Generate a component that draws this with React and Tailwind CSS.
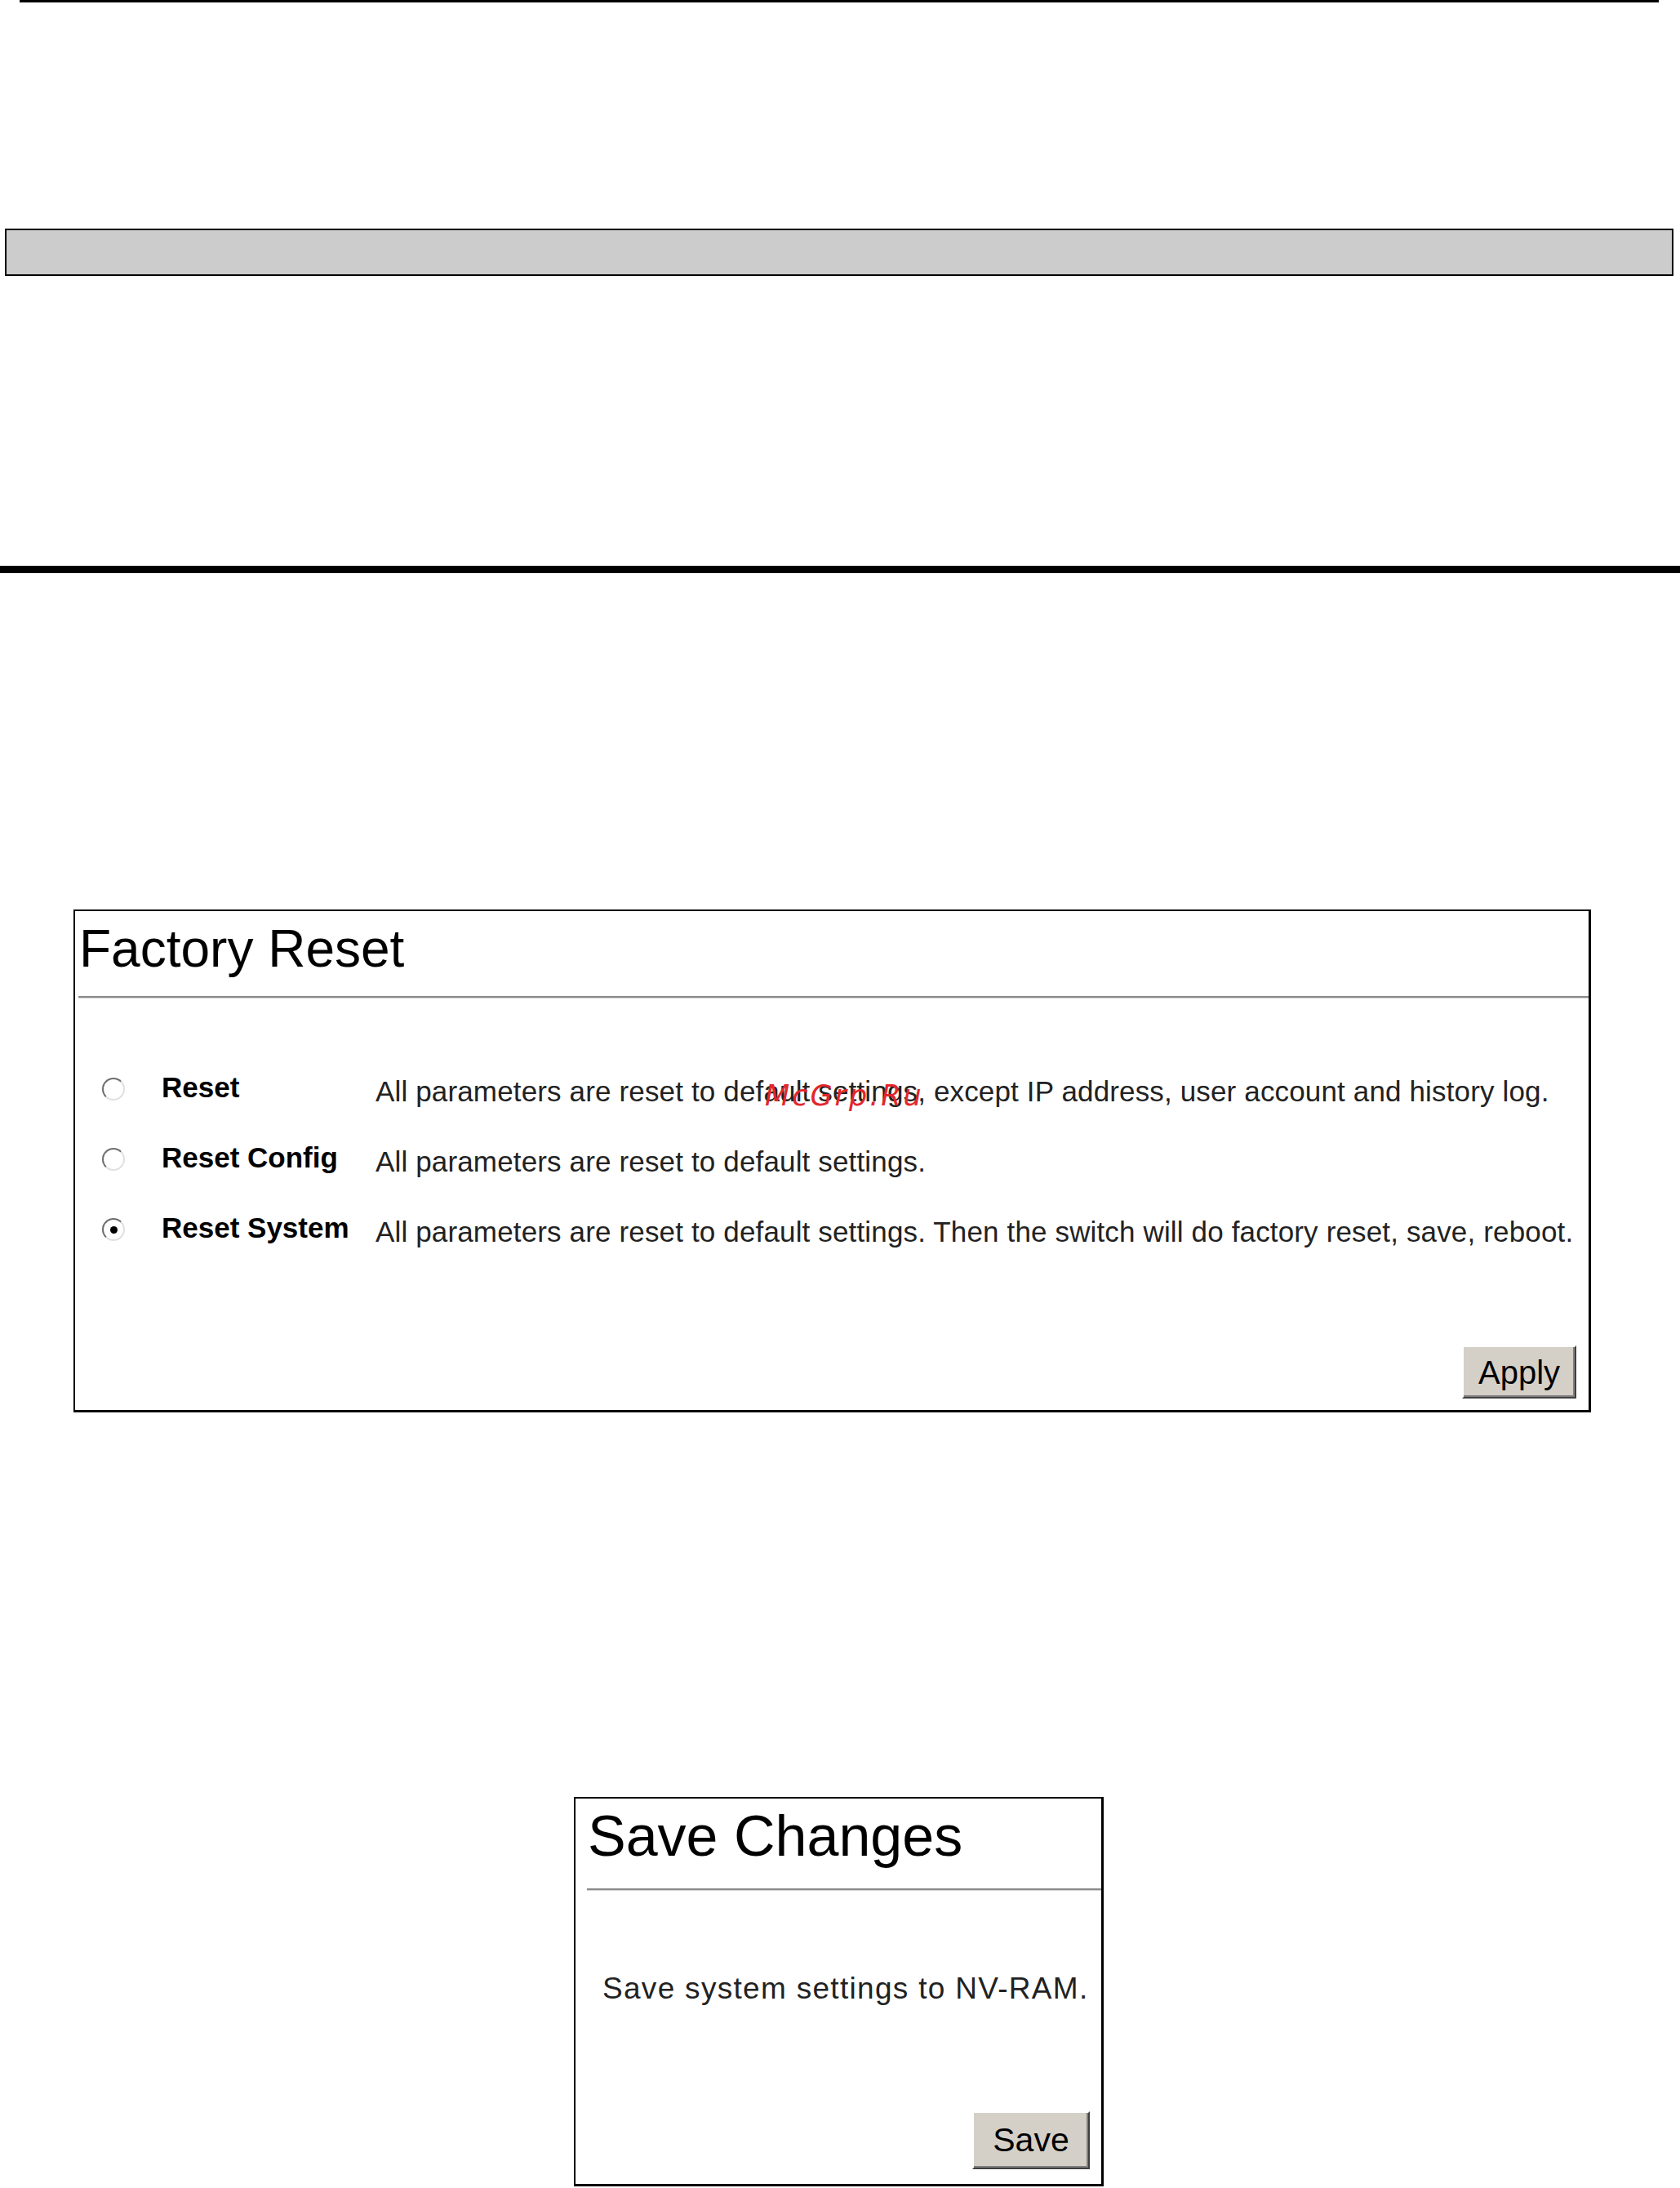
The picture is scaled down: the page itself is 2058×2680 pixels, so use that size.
import clsx from "clsx";

const font = "font-['Liberation_Sans',Arial,sans-serif]";

const resetOptions = [
  {
    id: "reset",
    label: "Reset",
    description: "All parameters are reset to default settings, except IP address, user account and history log."
  },
  {
    id: "reset-config",
    label: "Reset Config",
    description: "All parameters are reset to default settings."
  },
  {
    id: "reset-system",
    label: "Reset System",
    description: "All parameters are reset to default settings. Then the switch will do factory reset, save, reboot."
  }
];

function Radio({ checked }) {
  return (
    <span className="grid h-[28px] w-[28px] place-items-center rounded-full border-2 border-t-[#6e6e6e] border-l-[#6e6e6e] border-r-[#e0e0e0] border-b-[#e0e0e0] bg-white">
      {checked ? <span className="h-[9px] w-[9px] rounded-full bg-black" /> : null}
    </span>
  );
}

function ClassicButton({ children, className }) {
  return (
    <button
      type="button"
      className={clsx(
        "border-2 border-t-white border-l-white border-r-[#404040] border-b-[#404040] bg-[#d4d0c8] text-black shadow-[inset_-2px_-2px_0_#808080]",
        font,
        className
      )}
    >
      {children}
    </button>
  );
}

function Rule({ className }) {
  return <div className={clsx("h-[2px] bg-[#8a8a8a] shadow-[0_1px_0_#d2d2d2]", className)} />;
}

function FactoryReset() {
  const selected = "reset-system";

  return (
    <section className="relative ml-[90px] mt-[412px] flex h-[616px] w-[1859px] flex-col border-2 border-r-[3px] border-b-[3px] border-black bg-white">
      <h2 className={clsx("pl-[5px] pt-[14px] text-[64px] leading-none font-normal text-black", font)}>
        Factory Reset
      </h2>
      <Rule className="ml-[4px] mt-[26px]" />

      <div className="mt-[90px] flex flex-col">
        {resetOptions.map((option) => (
          <label key={option.id} className="flex h-[86px] items-start">
            <span className="ml-[33px] mt-[8px]">
              <Radio checked={option.id === selected} />
            </span>
            <span className={clsx("ml-[45px] w-[262px] text-[35px] leading-[40px] font-bold text-black", font)}>
              {option.label}
            </span>
            <span className={clsx("pt-[5px] text-[35px] leading-[40px] tracking-[0.15px] text-[#222]", font)}>
              {option.description}
            </span>
          </label>
        ))}
      </div>

      <div className="mt-[78px] flex justify-end pr-[15px]">
        <ClassicButton className="h-[65px] w-[140px] text-[40px] leading-none">Apply</ClassicButton>
      </div>

      <span className="absolute left-[845px] top-[209px] font-['DejaVu_Sans',sans-serif] text-[35px] leading-none tracking-[3px] text-[#e3262b] italic">
        McGrp.Ru
      </span>
    </section>
  );
}

function SaveChanges() {
  return (
    <section className="ml-[703px] mt-[471px] flex h-[477px] w-[649px] flex-col border-2 border-r-[3px] border-b-[3px] border-black bg-white">
      <h2 className={clsx("pl-[15px] pt-[11px] text-[70px] leading-none font-normal text-black", font)}>
        Save Changes
      </h2>
      <Rule className="ml-[14px] mt-[29px]" />
      <p className={clsx("ml-[33px] mt-[101px] text-[37px] leading-[40px] tracking-[1.3px] text-[#222]", font)}>
        Save system settings to NV-RAM.
      </p>
      <div className="mt-auto flex justify-end pb-[18px] pr-[14px]">
        <ClassicButton className="h-[71px] w-[144px] text-[41px] leading-none">Save</ClassicButton>
      </div>
    </section>
  );
}

export default function App() {
  return (
    <div className="min-h-[2680px] w-[2058px] overflow-hidden bg-white">
      <div className="ml-[24px] h-[3px] w-[2008px] bg-black" />
      <div className="ml-[6px] mt-[277px] h-[58px] w-[2044px] border-2 border-black bg-[#cccccc]" />
      <div className="mt-[355px] h-[9px] w-full bg-black" />
      <FactoryReset />
      <SaveChanges />
    </div>
  );
}
